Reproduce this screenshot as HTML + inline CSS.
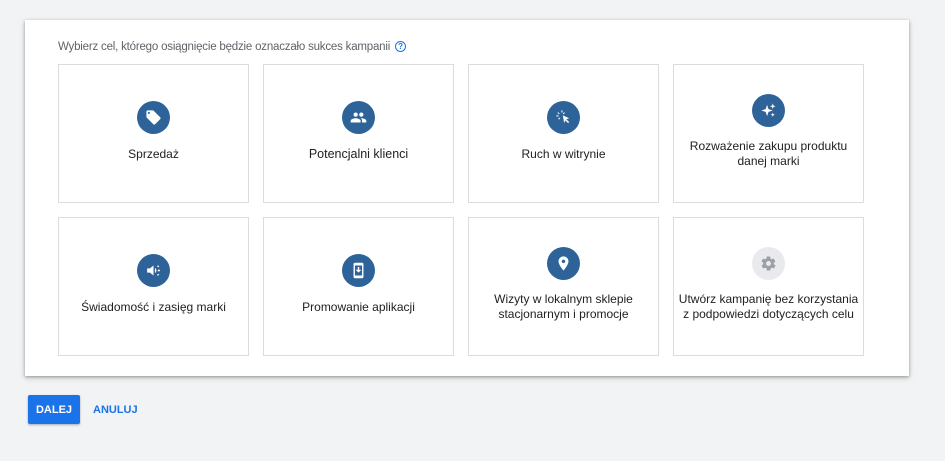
<!DOCTYPE html>
<html><head><meta charset="utf-8"><style>
body{margin:0;width:945px;height:461px;background:#f1f3f4;font-family:"Liberation Sans",sans-serif;position:relative;overflow:hidden}
.panel{position:absolute;left:25px;top:20px;width:884px;height:356px;background:#fff;box-shadow:0 1px 3px rgba(0,0,0,.3),0 2px 6px rgba(0,0,0,.15)}
.title{position:absolute;left:58px;top:41px;font-size:11.5px;color:#5f6368;letter-spacing:-0.2px}
.q{display:inline-block;width:9px;height:9px;border:1.3px solid #1a73e8;border-radius:50%;font-size:8px;line-height:9px;text-align:center;color:#1a73e8;font-weight:bold;margin-left:5px;vertical-align:1px;letter-spacing:0}
.card{position:absolute;width:191px;height:139px;border:1.5px solid #dadce0;background:#fff;box-sizing:border-box}
.ic{position:absolute;left:78px;top:36px;width:33px;height:33px;border-radius:50%;background:#2e6399}
.ic svg{position:absolute;left:8px;top:8px}
.lb{position:absolute;left:0;right:0;text-align:center;font-size:12px;color:#202124;line-height:15px}
.btn{position:absolute;left:28px;top:395px;width:52px;height:29px;background:#1a73e8;color:#fff;font-size:11px;font-weight:bold;text-align:center;line-height:31px;border-radius:2px;box-shadow:0 1px 2px rgba(0,0,0,.3)}
.an{position:absolute;left:93px;top:404px;font-size:11px;font-weight:bold;color:#1a73e8}
</style></head><body>
<div class="panel"></div>
<div class="title">Wybierz cel, którego osiągnięcie będzie oznaczało sukces kampanii<span class="q">?</span></div>

<div class="card" style="left:58px;top:64px"><div class="ic"><svg width="17" height="17" viewBox="0 0 24 24"><path fill="#fff" d="M21.4 11.6l-9-9C12.1 2.2 11.6 2 11 2H4c-1.1 0-2 .9-2 2v7c0 .6.2 1.1.6 1.4l9 9c.4.4.9.6 1.4.6s1.1-.2 1.4-.6l7-7c.4-.4.6-.9.6-1.4s-.2-1-.6-1.4zM5.5 7C4.7 7 4 6.3 4 5.5S4.7 4 5.5 4 7 4.7 7 5.5 6.3 7 5.5 7z"/></svg></div><div class="lb" style="top:82px">Sprzedaż</div></div>
<div class="card" style="left:263px;top:64px"><div class="ic"><svg width="17" height="17" viewBox="0 0 24 24"><path fill="#fff" d="M16 11c1.7 0 3-1.3 3-3s-1.3-3-3-3-3 1.3-3 3 1.3 3 3 3zm-8 0c1.7 0 3-1.3 3-3S9.7 5 8 5 5 6.3 5 8s1.3 3 3 3zm0 2c-2.3 0-7 1.2-7 3.5V19h14v-2.5C15 14.2 10.3 13 8 13zm8 0c-.3 0-.6 0-1 .1 1.2.8 2 1.9 2 3.4V19h6v-2.5c0-2.300-4.7-3.5-7-3.5z"/></svg></div><div class="lb" style="top:82px;font-size:12.5px">Potencjalni klienci</div></div>
<div class="card" style="left:468px;top:64px"><div class="ic"><svg width="17" height="17" viewBox="0 0 24 24"><path fill="#fff" d="M11 9l9 4-4 1.5 4 4-1.5 1.5-4-4L13 20zM9 2h1.5v3H9zM3.5 5.5l1-1 2 2-1 1zM2 9h3v1.5H2zM13 4.5l1 1-2 2-1-1zM4.5 14l2-2 1 1-2 2z"/></svg></div><div class="lb" style="top:82px">Ruch w witrynie</div></div>
<div class="card" style="left:673px;top:64px"><div class="ic" style="top:29px"><svg width="17" height="17" viewBox="0 0 24 24"><path fill="#fff" d="M10 4l2 6 6 2-6 2-2 6-2-6-6-2 6-2zM18 2l1 3 3 1-3 1-1 3-1-3-3-1 3-1zM18 15l.8 2.2 2.2.8-2.2.8L18 21l-.8-2.2-2.2-.8 2.2-.8z"/></svg></div><div class="lb" style="top:74px">Rozważenie zakupu produktu<br>danej marki</div></div>

<div class="card" style="left:58px;top:217px"><div class="ic"><svg width="17" height="17" viewBox="0 0 24 24"><path fill="#fff" d="M3 9v6h4l5 4V5L7 9zM14 8.5c1.2.6 2 1.9 2 3.5s-.8 2.9-2 3.5zM17 6l1-1.5 2 1.5-1 1.5zM18 11h3v2h-3zM17 18l1 1.5 2-1.5-1-1.5z"/></svg></div><div class="lb" style="top:82px">Świadomość i zasięg marki</div></div>
<div class="card" style="left:263px;top:217px"><div class="ic"><svg width="17" height="17" viewBox="0 0 24 24"><path fill="#fff" d="M17 1H7c-1.1 0-2 .9-2 2v18c0 1.1.9 2 2 2h10c1.1 0 2-.9 2-2V3c0-1.1-.9-2-2-2zm0 18H7V5h10zM13 7h-2v4H8l4 4 4-4h-3z"/></svg></div><div class="lb" style="top:82px">Promowanie aplikacji</div></div>
<div class="card" style="left:468px;top:217px"><div class="ic" style="top:29px"><svg width="17" height="17" viewBox="0 0 24 24"><path fill="#fff" d="M12 2C8.1 2 5 5.1 5 9c0 5.2 7 13 7 13s7-7.8 7-13c0-3.9-3.1-7-7-7zm0 9.5c-1.4 0-2.5-1.1-2.5-2.5s1.1-2.5 2.5-2.5 2.5 1.1 2.5 2.5-1.1 2.5-2.5 2.5z"/></svg></div><div class="lb" style="top:74px">Wizyty w lokalnym sklepie<br>stacjonarnym i promocje</div></div>
<div class="card" style="left:673px;top:217px"><div class="ic" style="top:29px;background:#e8eaed"><svg width="17" height="17" viewBox="0 0 24 24"><path fill="#9aa0a6" d="M19.4 13c0-.3.1-.6.1-1s0-.7-.1-1l2.1-1.6c.2-.2.2-.4.1-.6l-2-3.5c-.1-.2-.4-.3-.6-.2l-2.5 1c-.5-.4-1.1-.7-1.7-1l-.4-2.6c0-.2-.2-.4-.5-.4h-4c-.2 0-.5.2-.5.4l-.4 2.6c-.6.3-1.200.6-1.7 1l-2.5-1c-.2-.1-.5 0-.6.2l-2 3.5c-.1.2-.1.5.1.6L4.6 11c0 .3-.1.6-.1 1s0 .7.1 1l-2.1 1.6c-.2.2-.2.4-.1.6l2 3.5c.1.2.4.3.6.2l2.5-1c.5.4 1.1.7 1.7 1l.4 2.6c0 .2.2.4.5.4h4c.2 0 .5-.2.5-.4l.4-2.6c.6-.3 1.2-.6 1.7-1l2.5 1c.2.1.5 0 .6-.2l2-3.5c.1-.2.1-.5-.1-.6zM12 15.5c-1.9 0-3.5-1.6-3.5-3.5s1.6-3.5 3.5-3.5 3.5 1.6 3.5 3.5-1.6 3.5-3.5 3.5z"/></svg></div><div class="lb" style="top:74px">Utwórz kampanię bez korzystania<br>z podpowiedzi dotyczących celu</div></div>

<div class="btn">DALEJ</div>
<div class="an">ANULUJ</div>
</body></html>
